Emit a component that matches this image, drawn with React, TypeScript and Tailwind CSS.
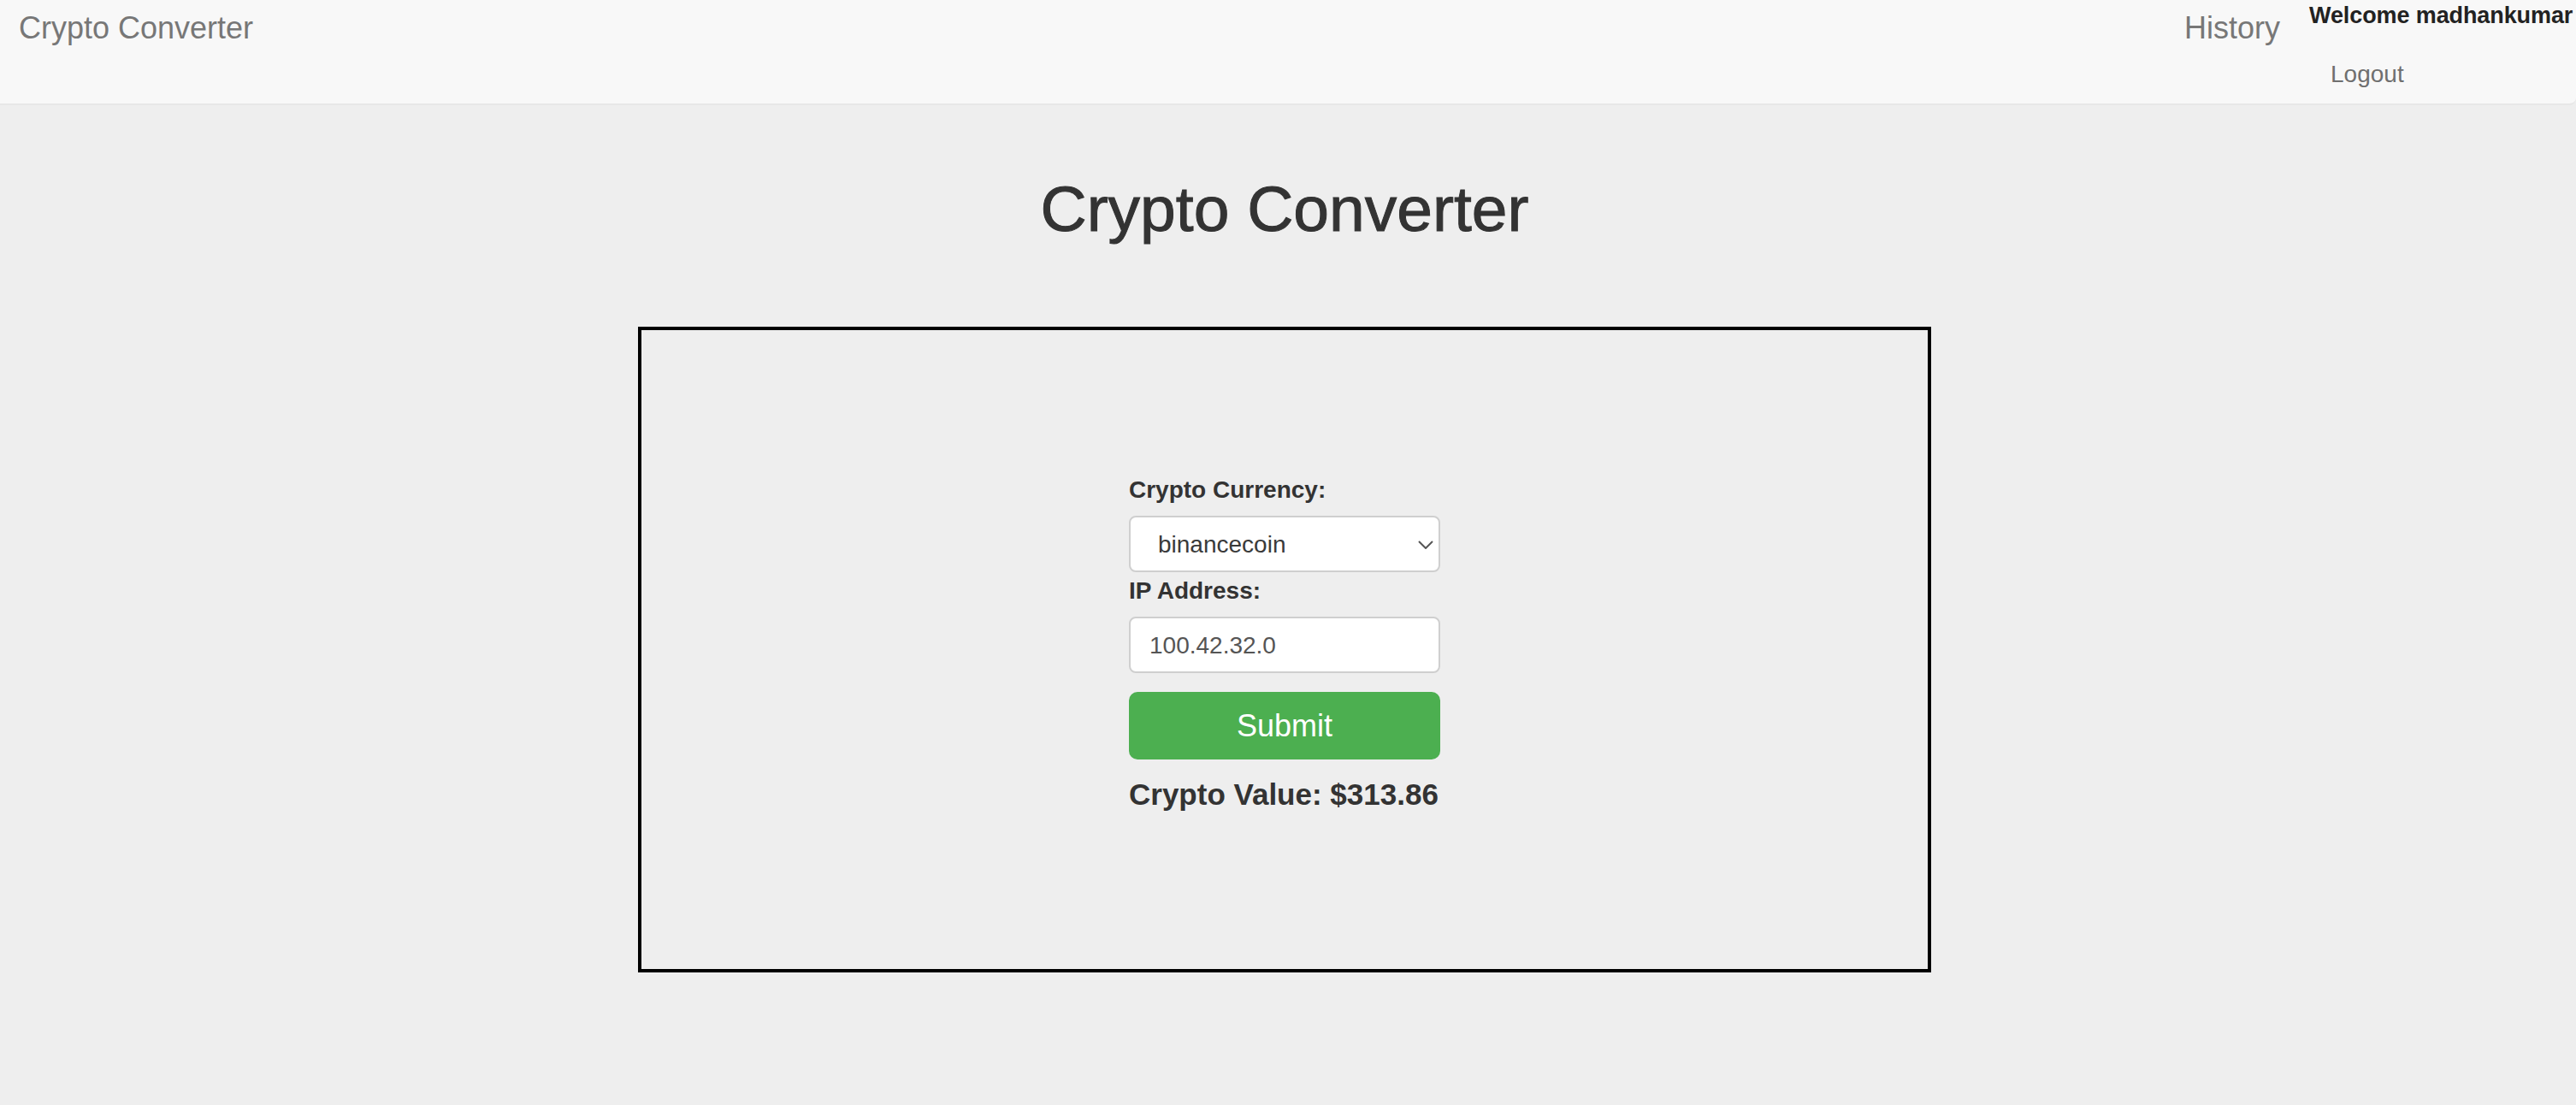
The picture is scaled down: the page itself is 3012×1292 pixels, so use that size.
import { useState } from "react";

const coins = ["bitcoin", "ethereum", "binancecoin", "ripple", "cardano", "dogecoin"];

function Navbar() {
  return (
    <nav className="flex h-[123px] w-full items-start border-b-2 border-[#e7e7e7] bg-[#f8f8f8] rounded-br-[8px]">
      <a href="#" className="pl-[22px] pt-[15px] text-[36px] leading-[36px] text-[#777]">
        Crypto Converter
      </a>
      <div className="ml-auto flex w-[458px] shrink-0 items-start whitespace-nowrap">
        <a href="#" className="pt-[15px] text-[36px] leading-[36px] text-[#777]">
          History
        </a>
        <div className="ml-[34px] flex flex-col">
          <span className="pt-[4px] text-[27px] font-bold leading-[28px] tracking-[-0.1px] text-[#222]">
            Welcome madhankumar
          </span>
          <a href="#" className="mt-[41px] pl-[25px] text-[28px] leading-[28px] text-[#6f6f6f]">
            Logout
          </a>
        </div>
      </div>
    </nav>
  );
}

export default function App() {
  const [coin, setCoin] = useState("binancecoin");
  const [ip, setIp] = useState("100.42.32.0");
  const [value] = useState("$313.86");

  return (
    <div className="min-h-screen w-full overflow-hidden bg-[#eeeeee] font-['Liberation_Sans',Arial,sans-serif] text-[#333]">
      <Navbar />

      <main className="flex flex-col items-center pr-[8px]">
        <h1 className="mt-[80px] text-[75px] font-normal leading-[82px] text-[#333] [-webkit-text-stroke:1px_#333]">
          Crypto Converter
        </h1>

        <div className="mt-[97px] flex h-[755px] w-[1512px] items-center justify-center border-4 border-black">
          <form
            onSubmit={(e) => e.preventDefault()}
            className="flex w-[364px] flex-col"
          >
            <label className="text-[28px] font-bold leading-[40px] text-[#333]">
              Crypto Currency:
            </label>
            <div className="relative mt-[10px]">
              <select
                value={coin}
                onChange={(e) => setCoin(e.target.value)}
                className="h-[66px] w-full appearance-none rounded-[8px] border-2 border-[#cfcfcf] bg-white pl-[32px] pt-[2px] text-[28px] text-[#3a3a3a] outline-none"
              >
                {coins.map((c) => (
                  <option key={c} value={c}>
                    {c}
                  </option>
                ))}
              </select>
              <svg
                className="pointer-events-none absolute right-[8px] top-[29px] h-[10px] w-[18px]"
                viewBox="0 0 18 10"
                fill="none"
                stroke="#555"
                strokeWidth="2"
              >
                <path d="M1 1l8 8 8-8" />
              </svg>
            </div>

            <label className="mt-[2px] text-[28px] font-bold leading-[40px] text-[#333]">
              IP Address:
            </label>
            <input
              value={ip}
              onChange={(e) => setIp(e.target.value)}
              className="mt-[10px] h-[66px] w-full rounded-[8px] border-2 border-[#cfcfcf] bg-white px-[22px] pt-[2px] text-[28px] text-[#555] outline-none"
            />

            <button
              type="submit"
              className="mt-[22px] h-[79px] w-full rounded-[10px] bg-[#4caf50] text-[36px] text-white"
            >
              Submit
            </button>

            <h3 className="mb-[18px] mt-[21px] text-[35px] font-bold leading-[39px] text-[#333]">
              Crypto Value: {value}
            </h3>
          </form>
        </div>
      </main>
    </div>
  );
}
